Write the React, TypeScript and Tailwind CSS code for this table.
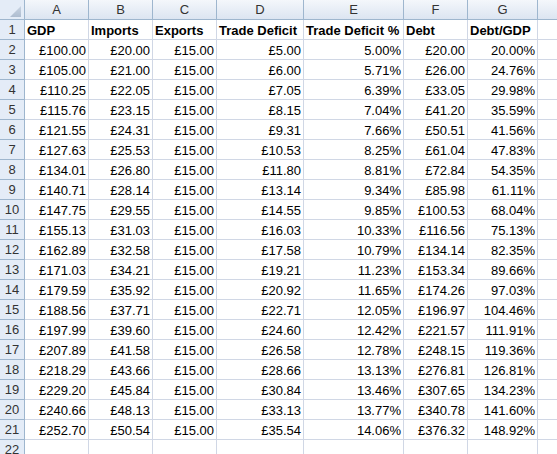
import React from "react";

// H is only partly on screen, its letter falls past the right edge
const cols = ["A", "B", "C", "D", "E", "F", "G", ""];

const headings = ["GDP", "Imports", "Exports", "Trade Deficit", "Trade Deficit %", "Debt", "Debt/GDP", ""];

const rows: string[][] = [
    ["£100.00", "£20.00", "£15.00", "£5.00", "5.00%", "£20.00", "20.00%"],
    ["£105.00", "£21.00", "£15.00", "£6.00", "5.71%", "£26.00", "24.76%"],
    ["£110.25", "£22.05", "£15.00", "£7.05", "6.39%", "£33.05", "29.98%"],
    ["£115.76", "£23.15", "£15.00", "£8.15", "7.04%", "£41.20", "35.59%"],
    ["£121.55", "£24.31", "£15.00", "£9.31", "7.66%", "£50.51", "41.56%"],
    ["£127.63", "£25.53", "£15.00", "£10.53", "8.25%", "£61.04", "47.83%"],
    ["£134.01", "£26.80", "£15.00", "£11.80", "8.81%", "£72.84", "54.35%"],
    ["£140.71", "£28.14", "£15.00", "£13.14", "9.34%", "£85.98", "61.11%"],
    ["£147.75", "£29.55", "£15.00", "£14.55", "9.85%", "£100.53", "68.04%"],
    ["£155.13", "£31.03", "£15.00", "£16.03", "10.33%", "£116.56", "75.13%"],
    ["£162.89", "£32.58", "£15.00", "£17.58", "10.79%", "£134.14", "82.35%"],
    ["£171.03", "£34.21", "£15.00", "£19.21", "11.23%", "£153.34", "89.66%"],
    ["£179.59", "£35.92", "£15.00", "£20.92", "11.65%", "£174.26", "97.03%"],
    ["£188.56", "£37.71", "£15.00", "£22.71", "12.05%", "£196.97", "104.46%"],
    ["£197.99", "£39.60", "£15.00", "£24.60", "12.42%", "£221.57", "111.91%"],
    ["£207.89", "£41.58", "£15.00", "£26.58", "12.78%", "£248.15", "119.36%"],
    ["£218.29", "£43.66", "£15.00", "£28.66", "13.13%", "£276.81", "126.81%"],
    ["£229.20", "£45.84", "£15.00", "£30.84", "13.46%", "£307.65", "134.23%"],
    ["£240.66", "£48.13", "£15.00", "£33.13", "13.77%", "£340.78", "141.60%"],
    ["£252.70", "£50.54", "£15.00", "£35.54", "14.06%", "£376.32", "148.92%"],
    ["", "", "", "", "", "", ""],
];

const RowHeader = ({ n }: { n: number }) => (
    <div className="h-[20px] border-r border-b border-[#9eb6ce] bg-[#e4ecf7] text-center leading-[20px] text-[#333]">
        {n}
    </div>
);

const Cell = ({ children, left, bold }: { children?: React.ReactNode; left?: boolean; bold?: boolean }) => (
    <div
        className={`h-[20px] border-r border-b border-[#d0d7e5] bg-white px-[2px] leading-[21px] whitespace-nowrap text-black ${left ? "text-left" : "text-right"} ${bold ? "font-bold" : ""}`}
    >
        {children}
    </div>
);

export default function App() {
    return (
        <div className="w-[557px] h-[454px] overflow-hidden bg-white font-['Liberation_Sans',Arial,sans-serif] text-[13px]">
            <div className="grid grid-cols-[25px_64px_64px_64px_87px_100px_64px_70px_64px] w-max">
                {/* corner */}
                <div className="relative h-[20px] border-r border-b border-[#9eb6ce] bg-[#e4ecf7]">
                    <svg width="24" height="19" className="absolute left-0 top-0">
                        <defs>
                            <linearGradient id="tri" x1="0" y1="0" x2="0" y2="1">
                                <stop offset="0" stopColor="#c9d4e2" />
                                <stop offset="1" stopColor="#aebdd0" />
                            </linearGradient>
                        </defs>
                        <polygon points="10,17 21,17 21,6" fill="url(#tri)" />
                    </svg>
                </div>
                {cols.map((c, i) => (
                    <div
                        key={i}
                        className="h-[20px] border-r border-b border-[#9eb6ce] bg-gradient-to-b from-[#f4f7fb] to-[#dce5f1] text-center leading-[20px] text-[#333]"
                    >
                        {c}
                    </div>
                ))}

                <RowHeader n={1} />
                {headings.map((h, i) => (
                    <Cell key={i} left bold>
                        {h}
                    </Cell>
                ))}

                {rows.map((r, i) => (
                    <React.Fragment key={i}>
                        <RowHeader n={i + 2} />
                        {r.map((v, j) => (
                            <Cell key={j}>{v}</Cell>
                        ))}
                        <Cell />
                    </React.Fragment>
                ))}
            </div>
        </div>
    );
}
